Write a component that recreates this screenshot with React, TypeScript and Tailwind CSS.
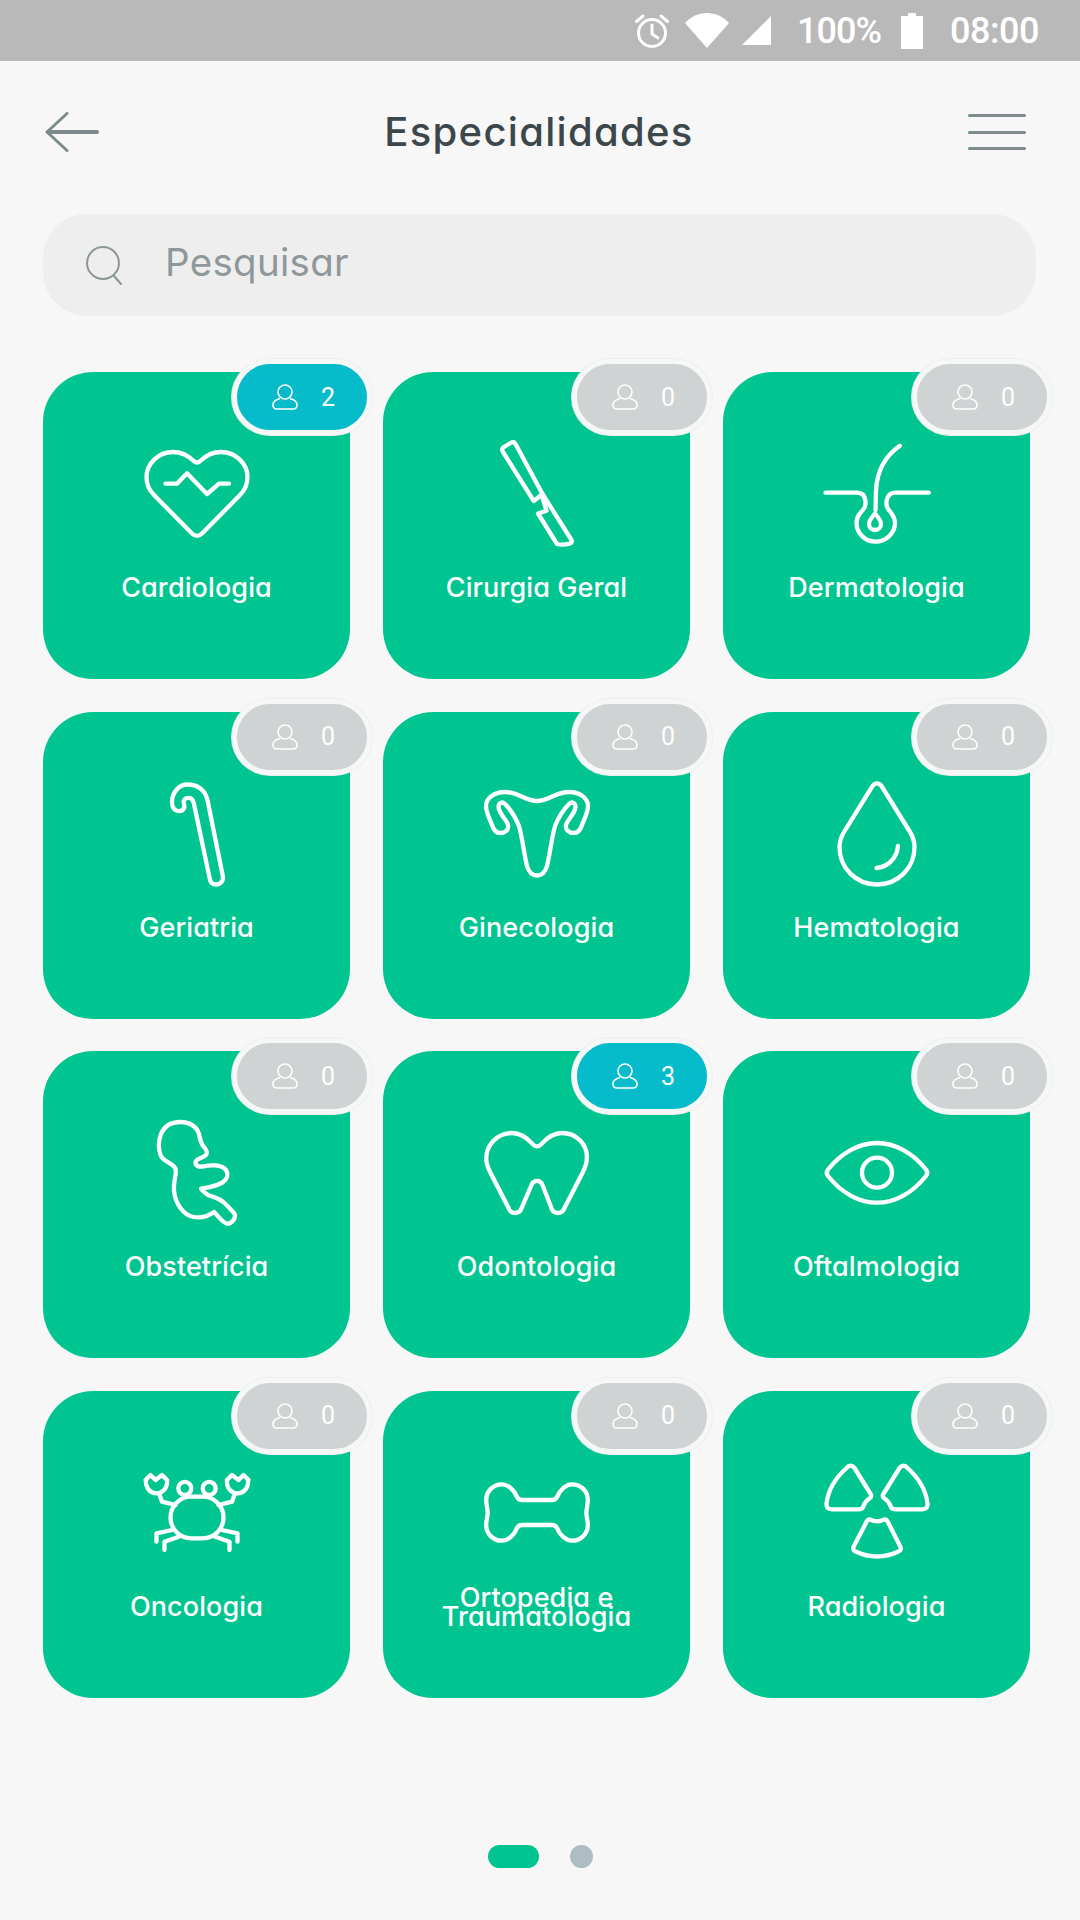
import React from "react";

const p = { fill: "none", stroke: "white", strokeWidth: 4.3, strokeLinecap: "round" as const, strokeLinejoin: "round" as const };

const icons: Record<string, React.ReactNode> = {
  heart: (
    <>
      <path d="M60 28.5c-1.5 0-2.5-.8-3.5-1.7C52 22.5 45 18 36 18 21 18 9.5 30 9.5 43c0 7 2.5 13 7.5 18l38 38.5c3 3 7 3 10 0L103 61c5-5 7.500-11 7.500-18 0-13-11.500-25-26.500-25-9 0-16 4.500-20.500 8.800-1 .9-2 1.700-3.500 1.700Z" />
      <path d="M28.500 49.700H40L50 39.300 70 60l12-10.300h10" />
    </>
  ),
  scalpel: (
    <>
      <path d="M26 18c-1.500-2.500-1-4 1-5l6.500-4c2.500-1.500 4-1 5 1L65.500 60 56.800 67Z" />
      <path d="M65.500 60 94.500 106c.7 2 0 3.300-2 3.700-4 .9-8.500 1.300-12.500.3L61 79.500l8.500-2.700L65 62" />
    </>
  ),
  hair: (
    <>
      <path d="M8.500 58.700H40c5 0 8 3 8.500 8.500.5 6-2 8-5 11.500-3 3.500-4 6-4 10 0 10.500 8.500 19 19 19s19.500-8.500 19.500-19c0-4-1.500-6.500-4-10-3-3.500-5-5.500-4.500-11.500C70.500 61.700 73.500 58.700 78 58.700h33.800" />
      <path d="M82.800 11.700C68 22 60 38 59 56l-.5 20" />
      <path d="M58 79.500c-3 4-6 6.500-6 10.500 0 3.300 2.600 6 6 6s6-2.700 6-6c0-4-3-6.500-6-10.500Z" />
    </>
  ),
  cane: (
    <path d="M47.500 33c-1 3-3.500 4.500-6.500 4-4-.7-6-4-6-9 0-10 7.500-17.500 15-17.500 10 0 18 5 20.500 15.500L85.800 102c1 5-2.500 8.500-6.600 8.500-3.500 0-5.700-2-6.400-5.700L57 30c-.7-4-3-6.200-5.500-6.200-3.500 0-5.500 2.500-4.700 5.200Z" />
  ),
  uterus: (
    <path d="M60 27c-12 0-18-9-32-9-12 0-19 7-19 14 0 6 4 14 6 19 2 6 5 8 8 8 5 0 9-3 8-8-1-5-9-11-9.500-18 0-4 3.500-6 6.500-3 4 4 10 12 14 22 3 10 5 28 8 40 2 7 6 9.500 10 9.500s8-2.500 10-9.500c3-12 5-30 8-40 4-10 10-18 14-22 3-3 6.500-1 6.500 3-.5 7-8.500 13-9.500 18-1 5 3 8 8 8 3 0 6-2 8-8 2-5 6-13 6-19 0-7-7-14-19-14-14 0-20 9-32 9Z" />
  ),
  drop: (
    <>
      <path d="M55.500 12c2.500-3.600 6.500-3.600 9 0L93 58c3 5 4.500 10 4.500 15 0 21-16.500 37.500-37.500 37.500S22.500 94 22.500 73c0-5 1.500-10 4.500-15Z" />
      <path d="M81 72c-1 12-10 21-21.500 22" />
    </>
  ),
  fetus: (
    <path d="M23.500 42C20 32 21 9 43.500 9 53 9 60 14 62 21c1 5 2 9 4 12 3 3 4.500 6 3.500 8-1.500 4-10.500 4-11 8-.5 4 3.500 5 7.500 4.500 8-2 17-1.500 21 1.500 4 3 4 8 2 11-4 6-14 8-25 9.700l3 3.300 4.800 3.400C78 84 86 88 90 92.400l7 7.600c3 4-2 11-7 10.700-4-.7-8-6.700-13-11.700-7 5-15 6-20.200 5C46 102 38 90 37 77.400 36 68 40 62 38.500 55.700 36 50 26 49 23.500 42Z" />
  ),
  tooth: (
    <path d="M60 33.400c-2 0-3-1-4.500-2.500C51 26 44 20 35 20 20 20 9.200 32 9.200 45.700c0 6 2.300 10 4.500 14.500l19 37c2 3.500 8.500 4 11 0L54.500 72c2-5.500 9-5.500 11 0l9.800 25.200c2.500 4 9 3.500 11 0l19-37c2.200-4.500 4.500-8.500 4.500-14.500C110.800 32 100 20 85 20c-9 0-16 6-20.500 10.900-1.500 1.500-2.500 2.500-4.500 2.500Z" />
  ),
  eye: (
    <>
      <path d="M11 56.500C24 40 42 30 60 30s36 10 49 26.500c1.500 2 1.500 4.500 0 6.500-13 16.500-31 26.700-49 26.700S24 79.500 11 63c-1.500-2-1.500-4.500 0-6.500Z" />
      <circle cx="60" cy="59.700" r="15" />
    </>
  ),
  crab: (
    <>
      <rect x="33.500" y="43.700" width="53" height="41.600" rx="20.800" />
      <circle cx="47.800" cy="35.300" r="6.500" />
      <circle cx="72.200" cy="35.300" r="6.500" />
      <path d="M8.500 27 13.500 22l5 5 6.500-5 5 5c.5 5-1 8-3 10-2.500 2.500-5 3.300-7.500 3.300-3 0-5.500-1-7.500-3.300-2.500-3-3.500-6-3-10Z" />
      <path d="M111.500 27 106.500 22l-5 5-6.500-5-5 5c-.5 5 1 8 3 10 2.500 2.500 5 3.300 7.500 3.300 3 0 5.500-1 7.500-3.300 2.500-3 3.500-6 3-10Z" />
      <path d="M22 40.300 25 48.700 38.500 52M98 40.300 95 48.700 81.500 52M35.200 77 19.500 80.300V88.700M84.800 77 100.500 80.300V88.700M41.800 83.700 27.500 88.700V97M78.200 83.700 92.500 88.700V97" />
    </>
  ),
  bone: (
    <path d="M45 47h30c3 0 4-1 5-3 2.500-7 9-12.700 15-12.700 9 0 15.800 7 15.800 15.700 0 5-1.500 9.500-1.500 13s1.500 7 1.500 12c0 8.700-6.800 15.700-15.800 15.700-6 0-12.500-5.700-15-12.700-1-2-2-3-5-3H45c-3 0-4 1-5 3-2.500 7-9 12.700-15 12.700-9 0-15.800-7-15.800-15.700 0-5 1.500-8.500 1.500-12S9.200 52 9.200 47C9.200 38.300 16 31.300 25 31.300c6 0 12.500 5.700 15 12.700 1 2 2 3 5 3Z" />
  ),
  radiation: (
    <>
      <path d="M29.500 15c2.500-3 5.500-3 8 0l15.500 25c1.500 2 2 3.500 0 5-3 2-5.500 5-6.500 8-.7 2.500-2 3.300-4.500 3.300H15c-4.500 0-6-2.500-5.500-6 1.500-12 8.500-25 20-35.300Z" />
      <path d="M90.500 15c-2.500-3-5.500-3-8 0L67 40c-1.500 2-2 3.500 0 5 3 2 5.500 5 6.500 8 .7 2.500 2 3.300 4.500 3.300H105c4.500 0 6-2.500 5.500-6-1.500-12-8.500-25-20-35.300Z" />
      <path d="M52.800 66.300c4.500 2.500 10 2.500 14.700 0 1.500 0 2.500.7 3 2L83 93c1.500 3 1 4.500-1.500 5.500-14 6.500-29 6.500-43 0-2.500-1-3-2.500-1.500-5.500L49.800 68.300c.5-1.300 1.500-2 3-2Z" />
    </>
  ),
};

const items = [
  ["Cardiologia", "heart", 2],
  ["Cirurgia Geral", "scalpel", 0],
  ["Dermatologia", "hair", 0],
  ["Geriatria", "cane", 0],
  ["Ginecologia", "uterus", 0],
  ["Hematologia", "drop", 0],
  ["Obstetrícia", "fetus", 0],
  ["Odontologia", "tooth", 3],
  ["Oftalmologia", "eye", 0],
  ["Oncologia", "crab", 0],
  ["Ortopedia e\nTraumatologia", "bone", 0],
  ["Radiologia", "radiation", 0],
] as [string, string, number][];

function Badge({ n }: { n: number }) {
  const on = n > 0;
  return (
    <div
      className={`absolute right-[-22px] top-[-13px] flex h-[76px] w-[140px] items-center rounded-full border-[5px] border-[#f6f7f7] pl-[34px] shadow-[0_0_0_1px_#eeeeee] ${
        on ? "bg-[#06bccb]" : "bg-[#cfd3d3]"
      }`}
    >
      <svg width="28" height="26" viewBox="0 0 28 26" fill="none" stroke="white" strokeWidth="1.6">
        <circle cx="14" cy="8" r="7" />
        <path d="M9 14.500C5 15.500 2 18 2 21c0 2.500 1.500 4 4 4h16c2.500 0 4-1.500 4-4 0-3-3-5.500-7-6.500" />
      </svg>
      <span className="ml-[22px] text-[25px] leading-none font-normal text-white font-['Roboto',sans-serif]">{n}</span>
    </div>
  );
}

function Card({ label, icon, n }: { label: string; icon: string; n: number }) {
  const lines = label.split("\n");
  return (
    <div className="relative flex h-[307px] w-[307px] flex-col items-center rounded-[50px] bg-[#00c590] pt-[62px]">
      <Badge n={n} />
      <svg width="120" height="120" viewBox="0 0 120 120" {...p}>
        {icons[icon]}
      </svg>
      <div className="mt-[20px] flex h-[28px] flex-col items-center justify-center text-center text-[27px] leading-[19px] font-medium tracking-[0.1px] whitespace-nowrap text-white">
        {lines.map((l) => (
          <div key={l} className={lines.length > 1 ? "h-[19px]" : "h-[28px] leading-[28px]"}>{l}</div>
        ))}
      </div>
    </div>
  );
}

export default function App() {
  return (
    <div className="flex h-[1920px] w-[1080px] flex-col overflow-hidden bg-[#f7f7f7] font-['Inter',sans-serif] [font-feature-settings:'cv11']">
      <div className="flex h-[61px] items-center bg-[#b9b9b9] pl-[634px] text-white font-['Roboto',sans-serif]">
        <svg width="36" height="36" viewBox="0 0 36 36" fill="none" stroke="white" strokeWidth="3" strokeLinecap="round">
          <circle cx="18" cy="20" r="13.500" />
          <path d="M18 12v9l6 4M2.500 8.500 9 3M33.500 8.500 27 3" />
        </svg>
        <svg width="44" height="35" viewBox="0 0 44 35" fill="white" className="ml-[15px]">
          <path d="M22 35 0 10C6 3.500 13.500 0 22 0s16 3.500 22 10Z" />
        </svg>
        <svg width="29" height="29" viewBox="0 0 29 29" fill="white" className="ml-[13px]">
          <path d="M29 0V29H0Z" />
        </svg>
        <span className="ml-[26px] w-[85px] text-[36px] leading-none font-medium tracking-[-1px]">100%</span>
        <svg width="22" height="36" viewBox="0 0 22 36" fill="white" className="ml-[19px]">
          <path d="M7 0h8v3h7v33H0V3h7Z" />
        </svg>
        <span className="ml-[27px] text-[36px] leading-none font-medium tracking-[-0.5px]">08:00</span>
      </div>

      <div className="flex h-[142px] items-center justify-between pr-[54px] pl-[45px]">
        <div className="w-[65px]">
          <svg width="54" height="40" viewBox="0 0 54 40" fill="none" stroke="#7c8a8c" strokeLinecap="round" strokeLinejoin="round">
            <path d="M22 1.500 2 20l20 18.500" strokeWidth="3" />
            <path d="M3 20h49" strokeWidth="4" />
          </svg>
        </div>
        <h1 className="text-[40px] leading-none font-medium tracking-[1.300px] text-[#3c474c]">Especialidades</h1>
        <div className="flex w-[58px] flex-col gap-[13.500px]">
          <div className="h-[3px] rounded-full bg-[#7f8c8d]" />
          <div className="h-[3px] rounded-full bg-[#7f8c8d]" />
          <div className="h-[3px] rounded-full bg-[#7f8c8d]" />
        </div>
      </div>

      <div className="mt-[11px] ml-[43px] flex h-[102px] w-[993px] items-center rounded-[44px] bg-[#eeeeee] pl-[42px]">
        <svg width="38" height="40" viewBox="0 0 38 40" fill="none" stroke="#8c9799" strokeWidth="2" strokeLinecap="round">
          <circle cx="18" cy="18" r="16" />
          <path d="M29 31l7 8" />
        </svg>
        <span className="mb-[6px] ml-[42px] text-[38.500px] leading-none font-normal tracking-[0.3px] text-[#8e989b]">Pesquisar</span>
      </div>

      <div className="mt-[56px] ml-[43px] grid grid-cols-[repeat(3,307px)] gap-x-[33px] gap-y-[32.500px]">
        {items.map(([l, i, n]) => (
          <Card key={l} label={l} icon={i} n={n} />
        ))}
      </div>

      <div className="mt-[147px] flex items-center justify-center gap-[31px]">
        <div className="h-[23px] w-[51px] rounded-full bg-[#00c590]" />
        <div className="h-[23px] w-[23px] rounded-full bg-[#aebcc4]" />
      </div>
    </div>
  );
}
